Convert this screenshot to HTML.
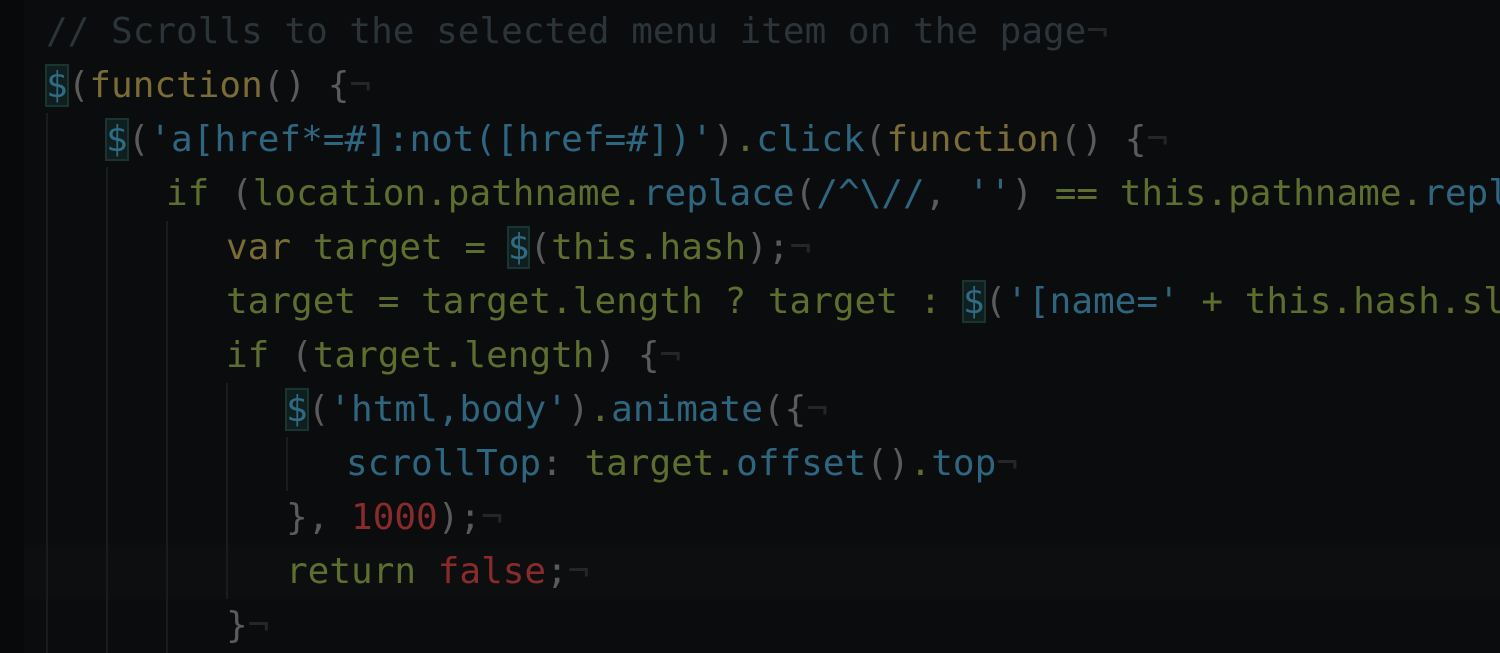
<!DOCTYPE html>
<html><head><meta charset="utf-8"><style>
html,body{margin:0;padding:0;}
body{width:1500px;height:653px;overflow:hidden;background:#0b0c0e;position:relative;font-family:"DejaVu Sans Mono","Liberation Mono",monospace;font-size:36px;}
.gut{position:absolute;left:0;top:0;width:24px;height:653px;background:#08090a;}
.hl{position:absolute;left:24px;top:545px;width:1476px;height:54px;background:#0d0e10;}
.l{position:absolute;white-space:pre;height:54px;line-height:54px;color:#5e6e2e;}
.g{position:absolute;width:2px;background:#1b1c1f;}
.c{color:#2b3539}.d{color:#2f6b82;background:#0f1e1e;outline:2px solid #1a3430;outline-offset:-1px}
.y{color:#7a6c36}.p{color:#5b5b5b}.b{color:#2e6680}.r{color:#8a2b2b}.n{color:#242628}
</style></head><body>
<div class="gut"></div><div class="hl"></div>
<div class="g" style="left:46px;top:113px;height:540px"></div>
<div class="g" style="left:106px;top:167px;height:486px"></div>
<div class="g" style="left:166px;top:221px;height:432px"></div>
<div class="g" style="left:226px;top:383px;height:216px"></div>
<div class="g" style="left:286px;top:437px;height:54px"></div>
<div class="l" style="left:46px;top:5px"><span class="c">// Scrolls to the selected menu item on the page</span><span class="n">¬</span></div>
<div class="l" style="left:46px;top:59px"><span class="d">$</span><span class="p">(</span><span class="y">function</span><span class="p">() {</span><span class="n">¬</span></div>
<div class="l" style="left:106px;top:113px"><span class="d">$</span><span class="p">(</span><span class="b">'a[href*=#]:not([href=#])'</span><span class="p">)</span>.<span class="b">click</span><span class="p">(</span><span class="y">function</span><span class="p">() {</span><span class="n">¬</span></div>
<div class="l" style="left:166px;top:167px">if <span class="p">(</span>location.pathname.<span class="b">replace</span><span class="p">(</span><span class="b">/^\//</span><span class="p">, </span><span class="b">''</span><span class="p">)</span> == this.pathname.<span class="b">replace</span></div>
<div class="l" style="left:226px;top:221px"><span class="y">var</span> target = <span class="d">$</span><span class="p">(</span>this.hash<span class="p">);</span><span class="n">¬</span></div>
<div class="l" style="left:226px;top:275px">target = target.length ? target : <span class="d">$</span><span class="p">(</span><span class="b">'[name='</span> + this.hash.slice</div>
<div class="l" style="left:226px;top:329px">if <span class="p">(</span>target.length<span class="p">) {</span><span class="n">¬</span></div>
<div class="l" style="left:286px;top:383px"><span class="d">$</span><span class="p">(</span><span class="b">'html,body'</span><span class="p">)</span>.<span class="b">animate</span><span class="p">({</span><span class="n">¬</span></div>
<div class="l" style="left:346px;top:437px"><span class="b">scrollTop</span><span class="p">:</span> target.<span class="b">offset</span><span class="p">()</span>.<span class="b">top</span><span class="n">¬</span></div>
<div class="l" style="left:286px;top:491px"><span class="p">}, </span><span class="r">1000</span><span class="p">);</span><span class="n">¬</span></div>
<div class="l" style="left:286px;top:545px">return <span class="r">false</span><span class="p">;</span><span class="n">¬</span></div>
<div class="l" style="left:226px;top:599px"><span class="p">}</span><span class="n">¬</span></div>
</body></html>
